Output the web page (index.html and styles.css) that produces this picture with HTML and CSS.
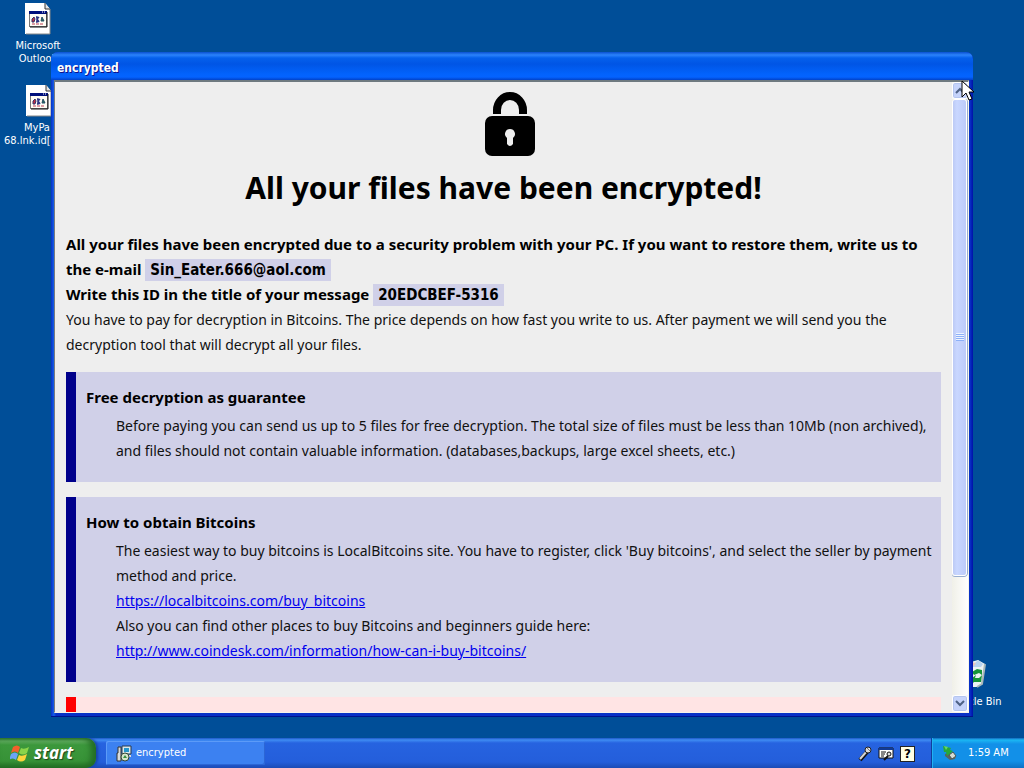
FILE: index.html
```html
<!DOCTYPE html>
<html lang="en">
<head>
<meta charset="utf-8">
<title>Desktop</title>
<link rel="stylesheet" href="styles.css">
</head>
<body>
<div class="desktop">
  <svg width="0" height="0" class="defs" aria-hidden="true">
    <symbol id="file" viewBox="0 0 26 32">
      <path d="M0 0h20l5 6v25H0z" fill="#fff"/>
      <path d="M25 6v25H1" fill="none" stroke="#888" stroke-width="1"/>
      <path d="M20 0v6h5" fill="#e4e4e4" stroke="#333" stroke-width="1"/>
      <rect x="4.500" y="8.500" width="17" height="15" fill="#fffdf4" stroke="#777"/>
      <path d="M4 8h18v3H4z" fill="#00107c"/>
      <path d="M17 9h1m1 0h1" stroke="#fff"/>
      <path d="M22 9v15H5" fill="none" stroke="#111"/>
      <path d="M7 16l2-2 1 2-1 3H7z" fill="#c03040" stroke="#37306a"/>
      <path d="M11 14h1v5h-1m3-5l-2 2 2 3" fill="none" stroke="#293483" stroke-width="1.500"/>
      <path d="M16 18l1-4 2 4z" fill="#257657" stroke="#254a66"/>
      <path d="M7 21h3m1 0h3m1 0h3" stroke="#c04058"/>
    </symbol>
  </svg>

  <div class="shortcut outlook"><svg width="26" height="32"><use href="#file"/></svg><span>Microsoft<br>Outlook</span></div>
  <div class="shortcut mypa"><svg width="26" height="32"><use href="#file"/></svg><span><span class="short">MyPa</span><br>68.lnk.id[</span></div>
  <div class="shortcut bin">
    <svg width="32" height="32" viewBox="0 0 32 32">
      <path d="M4 4l6-4 6 3 7-2 7 4-3 20-5 3H9L5 22z" fill="#edf3f4"/>
      <path d="M15 2l4 3 4-4 5 4-2 3H13z" fill="#b8d3ef"/>
      <path d="M17 3l4 1-2 3-4-1z" fill="#e9c5bc"/>
      <path d="M30 5l-3 20-5 3" fill="none" stroke="#a8b7b9" stroke-width="2"/>
      <path d="M17 13l5-3 5 1v5l-3-2-5 2zm0 6l4-3-1 3h4l3-3-1 7h-7l-2 2z" fill="#16953a"/>
    </svg>
    <span>Recycle Bin</span>
  </div>

  <section class="window">
    <header class="titlebar">encrypted</header>
    <div class="client">
      <main class="note">
        <svg class="lock" width="64" height="65" viewBox="-13 0 64 65" role="img" aria-label="Padlock">
          <path d="M12 22v-4a13 14 0 0 1 26 0v4" fill="none" stroke="#000" stroke-width="8"/>
          <rect y="24" width="50" height="40" rx="7"/>
          <path d="M25 37a5 5 0 0 1 3 9v6q-3 4-6 0v-6a5 5 0 0 1 3-9z" fill="#eee"/>
        </svg>
        <h1>All your files have been encrypted!</h1>
        <p class="strong">All your files have been encrypted due to a security problem with your PC. If you want to restore them, write us to<br>the e-mail <mark>Sin_Eater.666@aol.com</mark></p>
        <p class="strong">Write this ID in the title of your message <mark>20EDCBEF-5316</mark></p>
        <p>You have to pay for decryption in Bitcoins. The price depends on how fast you write to us. After payment we will send you the<br>decryption tool that will decrypt all your files.</p>
        <section class="box">
          <h2>Free decryption as guarantee</h2>
          <div class="details">Before paying you can send us up to 5 files for free decryption. The total size of files must be less than 10Mb (non archived),<br>and files should not contain valuable information. (databases,backups, large excel sheets, etc.)</div>
        </section>
        <section class="box">
          <h2>How to obtain Bitcoins</h2>
          <div class="details">The easiest way to buy bitcoins is LocalBitcoins site. You have to register, click 'Buy bitcoins', and select the seller by payment<br>method and price.<br><a href="https://localbitcoins.com/buy_bitcoins">https://localbitcoins.com/buy_bitcoins</a><br>Also you can find other places to buy Bitcoins and beginners guide here:<br><a href="http://www.coindesk.com/information/how-can-i-buy-bitcoins/">http://www.coindesk.com/information/how-can-i-buy-bitcoins/</a></div>
        </section>
        <section class="box alert"></section>
      </main>
      <div class="scrollbar">
        <button class="arrow" aria-label="Scroll up"><svg width="10" height="7" viewBox="0 0 10 7"><path d="M1 6l4-4 4 4" fill="none" stroke="#4d6185" stroke-width="2"/></svg></button>
        <div class="track">
          <div class="thumb"><i></i></div>
        </div>
        <button class="arrow" aria-label="Scroll down"><svg width="10" height="7" viewBox="0 0 10 7"><path d="M1 1l4 4 4-4" fill="none" stroke="#4d6185" stroke-width="2"/></svg></button>
      </div>
    </div>
  </section>

  <footer class="taskbar">
    <button class="start">
      <svg width="20" height="19" viewBox="0 0 20 19">
        <path d="M3 3q4-3 7 0L8 9Q5 6 1 9z" fill="#f2602b"/>
        <path d="M11 4q3 2 8-1l-2 6q-4 3-8 0z" fill="#8bd44a"/>
        <path d="M1 10q4-3 7 0l-2 6q-3-3-7 0z" fill="#6ba4f6"/>
        <path d="M9 11q3 2 8-1l-2 6q-4 3-8 0z" fill="#fdd43b"/>
      </svg>start</button>
    <button class="task">
      <svg width="16" height="17" viewBox="0 0 16 17">
        <path d="M6 1h9v8H6z" fill="#d9e8ec" stroke="#29394d"/>
        <path d="M8 3h5v4H8z" fill="#2696cb"/>
        <path d="M2 2h3v14H1V8h1z" fill="#d9dcdc" stroke="#333"/>
        <path d="M10 9v2h5" fill="none" stroke="#ddd" stroke-width="2"/>
        <circle cx="9" cy="12" r="4" fill="#d7e5cb" stroke="#354738"/>
        <path d="M7 13l2-3 2 3z" fill="#388d3f"/>
      </svg>encrypted</button>
    <div class="language">
      <svg width="14" height="16" viewBox="0 0 14 16"><path d="M2 14l7-8" stroke="#111" stroke-width="4"/><path d="M2 13l7-8" stroke="#d5d5d5" stroke-width="2"/><circle cx="10" cy="4" r="3" fill="#ddd" stroke="#222"/><path d="M9 2l3 3" stroke="#777"/></svg>
      <svg width="16" height="16" viewBox="0 0 16 16"><path d="M1 2h14v10H1z" fill="#fff" stroke="#111"/><path d="M1 2h14v2H1z" fill="#113a95"/><path d="M3 6h5M3 8h4M3 10h3" stroke="#111"/><path d="M6 14l4-4" stroke="#111" stroke-width="2"/><circle cx="11" cy="8" r="2" fill="#ddd" stroke="#111"/></svg>
      <button class="help" aria-label="Help">?</button>
    </div>
    <div class="tray">
      <svg width="16" height="16" viewBox="0 0 16 16"><path d="M3 9l5-2 6 4-1 3-5 1-5-4z" fill="#59645f"/><path d="M7 10l4-3 3 4-4 3z" fill="#d6dcd4" stroke="#4c5754"/><path d="M1 1l8 2-1 2 3 1-6 5-1-4-2 0z" fill="#25a83b"/><path d="M2 1l4 1-2 3z" fill="#65d565"/></svg>
      <time>1:59 AM</time>
    </div>
  </footer>

  <svg class="cursor" width="13" height="22" viewBox="0 0 13 22"><path d="M1 1v16l4-4 3 7 3-1-3-7h5z" fill="#fff" stroke="#000"/></svg>
</div>
</body>
</html>
```
FILE: styles.css
```css
* { box-sizing: border-box; }
body { margin: 0; font-family: "Noto Sans", sans-serif; }
button { font: inherit; border: 0; padding: 0; margin: 0; }
h1, h2, p { margin: 0; }
.defs { position: absolute; }
.desktop {
  position: relative;
  display: flex;
  flex-direction: column;
  justify-content: flex-end;
  height: 100vh;
  overflow: hidden;
  background: #004e98;
}

.shortcut {
  position: absolute;
  display: flex;
  flex-direction: column;
  align-items: center;
  gap: 4px;
  width: 76px;
  color: #fff;
  font-family: "DejaVu Sans Condensed", sans-serif;
  font-size: 11px;
  line-height: 13px;
  text-align: center;
  white-space: nowrap;
}
.outlook { left: 0; top: 3px; }
.mypa { left: 0; top: 85px; align-items: flex-start; padding-left: 4px; }
.mypa svg { margin-left: 22px; }
.mypa .short { padding-left: 20px; }
.mypa > span { text-align: left; }
.bin { right: 13px; bottom: 60px; }
.bin svg { margin-left: -4px; }

.window {
  position: absolute;
  top: 52px;
  right: 51px;
  bottom: 51px;
  left: 51px;
  display: flex;
  flex-direction: column;
  padding: 0 4px 3px 3px;
  background: linear-gradient(90deg, #0831c6, #1660e8 3px, #0831c6 5px, #0831c6 calc(100% - 3px), #0010a8);
  border-bottom: 1px solid #00138c;
  border-radius: 7px 7px 0 0;
}
.titlebar {
  flex: none;
  height: 28px;
  margin: 0 -4px 0 -3px;
  padding-left: 6px;
  border-radius: 7px 7px 0 0;
  background: linear-gradient(#0a50d0, #2b83fb 3px, #0560ec 6px, #0055e5 12px, #0263fc 22px, #0463ff 25px, #0142c8);
  color: #fff;
  font: bold 12px/32px "DejaVu Sans Condensed", sans-serif;
  text-shadow: 1px 1px #0f1089;
}
.client {
  flex: 1;
  display: flex;
  min-height: 0;
  border: 1px solid #777c80;
  border-width: 2px 1px 1px;
  border-color: #6f7a80 #f5f4ea #f5f4ea #777c80;
  background: #eee;
}
.note {
  flex: 1;
  min-width: 0;
  overflow: hidden;
  padding: 10px 11px 0;
  color: #111;
  font-size: 14px;
  line-height: 25px;
  white-space: nowrap;
}
.lock { display: block; margin: 0 auto; }
.note h1 {
  padding: 12px 0 25px;
  color: #000;
  font-size: 30px;
  line-height: 38px;
  text-align: center;
}
.strong { color: #000; font-size: 15px; font-weight: bold; }
mark { padding: 2px 5px; background: #d0d0e8; color: #000; font-family: "DejaVu Sans Condensed", sans-serif; line-height: 20px; }
.box {
  margin: 15px 0;
  padding: 13px 0 19px 10px;
  border-left: 10px solid #00008b;
  background: #d0d0e8;
}
.box h2 { margin-bottom: 3px; color: #000; font-size: 15px; line-height: 25px; }
.details { padding-left: 30px; }
.details a { color: #0000ee; }
.alert { height: 80px; border-color: #f00; background: #ffe4e4; }

.scrollbar {
  flex: none;
  display: flex;
  flex-direction: column;
  width: 16px;
  background: #f8f8f3;
}
.arrow {
  display: grid;
  place-items: center;
  height: 17px;
  border: 1px solid #fff;
  border-radius: 3px;
  background: #c5d3fb;
  box-shadow: inset 0 0 0 1px #b4c5ef;
}
.track { flex: 1; background: linear-gradient(90deg, #f0f0e8, #fff); }
.thumb {
  display: grid;
  place-items: center;
  width: 15px;
  height: 80%;
  border: 1px solid #fff;
  border-radius: 3px;
  background: linear-gradient(90deg, #bccaf5, #c9d7ff 30%, #bccbfa);
  box-shadow: 0 1px #98aecf, 1px 0 #98aecf;
}
.thumb i { width: 8px; height: 8px; background: repeating-linear-gradient(#eef4fe 0 1px, #8cb0f8 1px 2px); }

.taskbar {
  display: flex;
  height: 30px;
  background: linear-gradient(#1d58c8, #3f8cf3 2px, #2663e0 5px, #245edb 24px, #1c4bb5);
  color: #fff;
  font: 11px/16px "DejaVu Sans Condensed", sans-serif;
}
.start {
  display: flex;
  align-items: center;
  gap: 4px;
  width: 96px;
  padding-left: 10px;
  border-radius: 0 10px 10px 0;
  background: linear-gradient(#307b31, #61ad60 3px, #3c983c 7px, #379237 23px, #236e23);
  box-shadow: inset -5px 0 6px #236c24, 2px 0 3px #1744a2;
  color: #fff;
  font: italic bold 17px/24px "Open Sans", sans-serif;
  text-shadow: 1px 1px 1px #1d431d;
}
.task {
  display: flex;
  align-items: center;
  gap: 4px;
  width: 159px;
  height: 24px;
  margin: 3px 0 0 10px;
  padding-left: 10px;
  border-radius: 2px;
  background: #3c81f1;
  box-shadow: inset 1px 1px #5c9bf8, inset -1px -1px #2c66d5;
  color: #fff;
}
.language { display: flex; align-items: center; gap: 6px; margin-left: auto; padding: 2px 17px 0 0; }
.help { width: 13px; height: 14px; margin-left: 1px; background: #ffffe4; box-shadow: 0 0 0 1px #222; color: #000; font: bold 12px/14px "DejaVu Sans", sans-serif; }
.tray {
  display: flex;
  align-items: center;
  gap: 10px;
  width: 93px;
  padding-left: 10px;
  border-left: 1px solid #103f9c;
  background: linear-gradient(#1268bd, #1bb7f3 2px, #1290e8 6px, #1290e8 23px, #0d71c4);
  box-shadow: inset 1px 0 #20b3f2;
}
.cursor { position: absolute; top: 80px; right: 50px; }
```
